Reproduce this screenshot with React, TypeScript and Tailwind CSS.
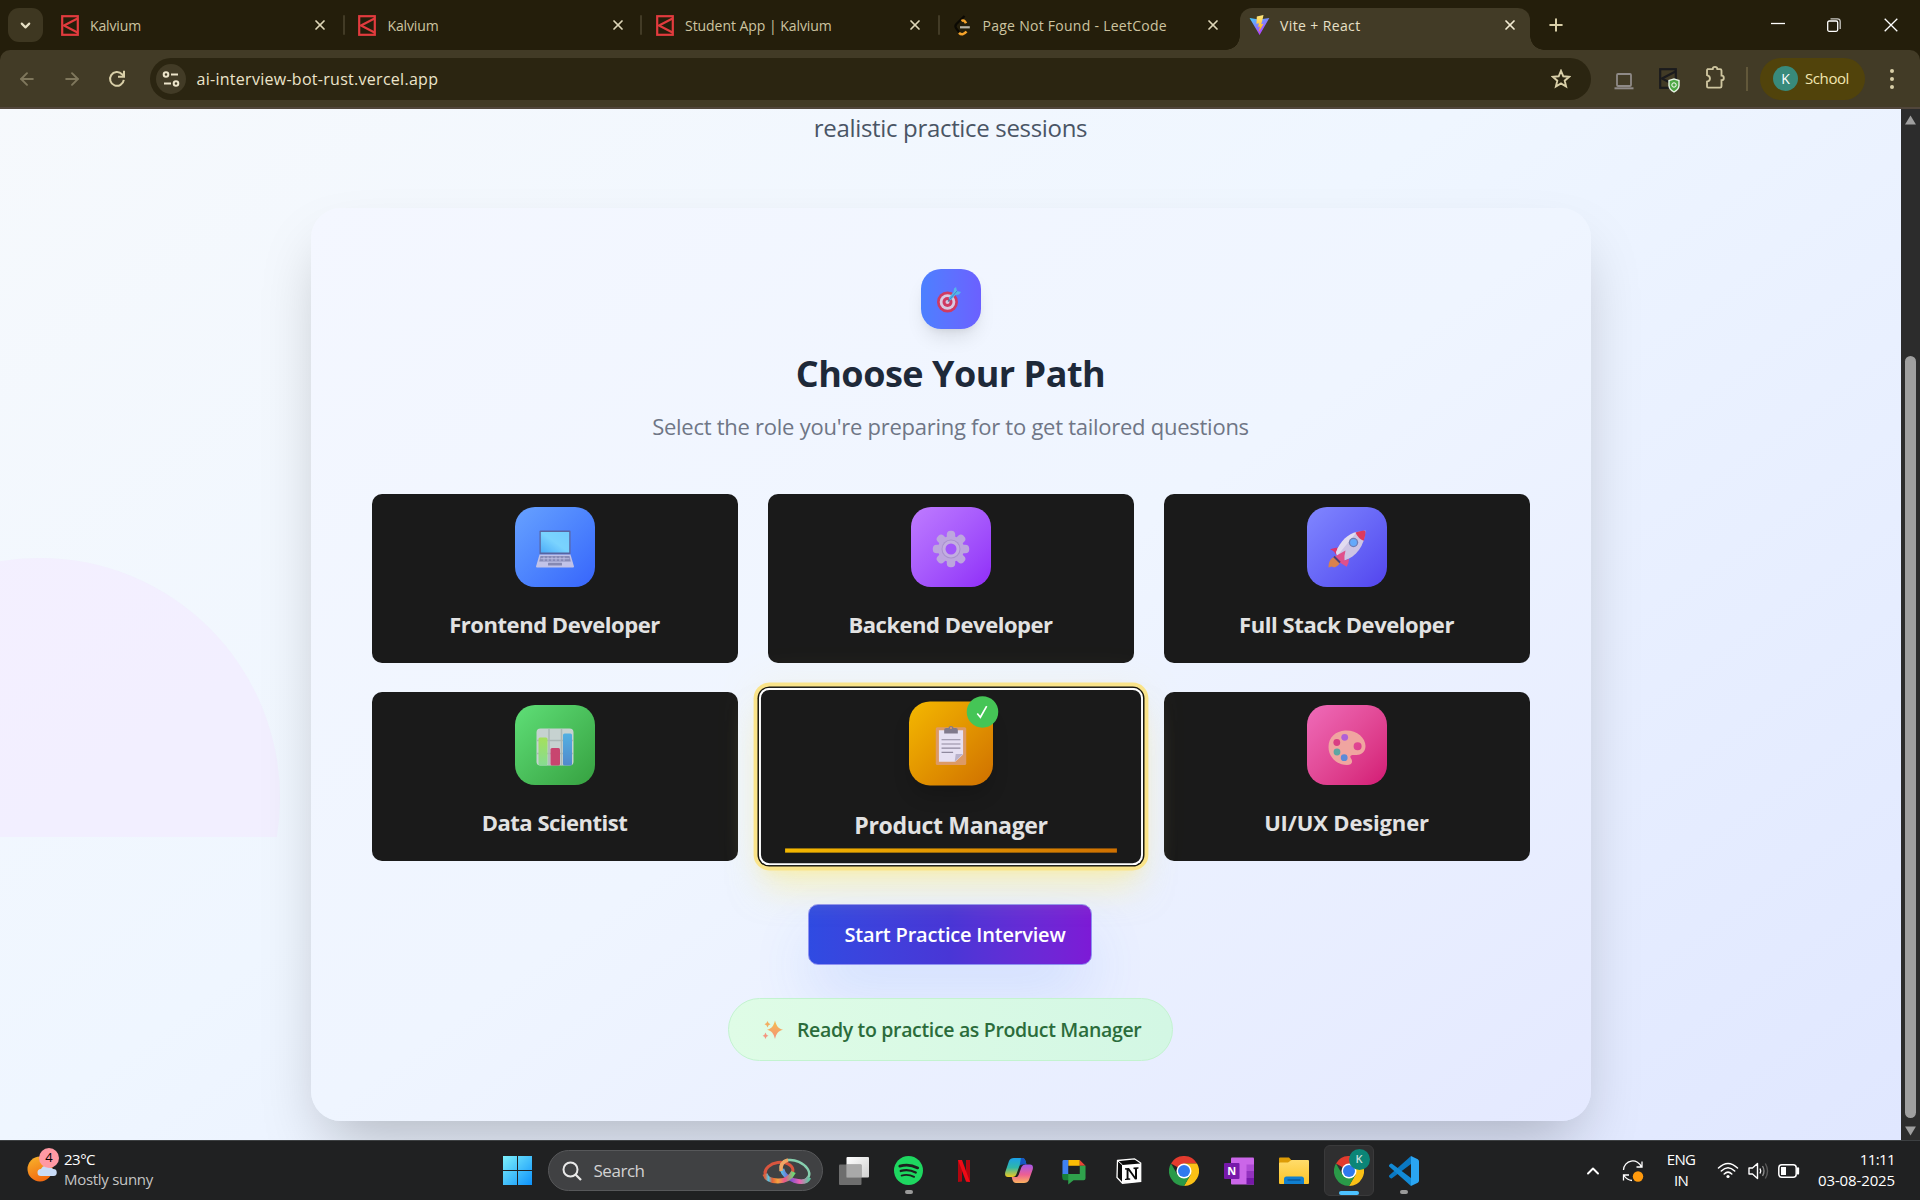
import type { ReactNode } from "react";
import { ArrowLeft, ArrowRight, ChevronDown, ChevronUp, Plus, X } from "lucide-react";

/* ---------- favicons ---------- */

function KalviumMark({ className }: { className: string }) {
  return (
    <svg viewBox="0 0 18 21" className={className} fill="none" stroke="currentColor" strokeWidth="2.200">
      <rect x="1.200" y="1.200" width="15.600" height="18.600" />
      <path d="M16.500 3.500 3 10.500 16.500 17.500" />
    </svg>
  );
}

function LeetCodeMark() {
  return (
    <svg viewBox="0 0 18 21" className="h-[21px] w-[18px]" fill="none" strokeWidth="2.200">
      <path d="M11.500 1 3.200 9.200Q1.600 11.200 3.200 13.400L6 17" stroke="#0b0903" />
      <path d="M8.500 6q2.500-1.800 4.500 2.300M6 17.800q3.500 3.500 7.500-1.300" stroke="#f5a32b" strokeWidth="2.600" />
      <path d="M7 12.300h9.800" stroke="#b9b4a6" />
    </svg>
  );
}

function ViteMark() {
  return (
    <svg viewBox="0 0 22 22" className="h-[22px] w-[21px]">
      <defs>
        <linearGradient id="vite-v" x1="0" y1="0" x2=".6" y2="1">
          <stop offset="0" stopColor="#41d1ff" />
          <stop offset="1" stopColor="#bd34fe" />
        </linearGradient>
        <linearGradient id="vite-bolt" x1="0" y1="0" x2="0" y2="1">
          <stop offset="0" stopColor="#ffea83" />
          <stop offset="1" stopColor="#ffa800" />
        </linearGradient>
      </defs>
      <path d="M.6 3.600 10.500 5.300 21.300 3.600 11.100 21.600Z" fill="url(#vite-v)" />
      <path d="M15.200.6 8.200 2 7.800 9.700l2.600-.5-.8 4 1.900-.6-1.300 5.900 5-8.800-2.400.5 1.200-4.300Z" fill="url(#vite-bolt)" />
    </svg>
  );
}

/* ---------- role emojis ---------- */

function LaptopEmoji() {
  return (
    <svg viewBox="0 0 38 38" className="size-[38px] opacity-90">
      <defs>
        <linearGradient id="screen" x1="0" y1="1" x2="1" y2="0">
          <stop offset="0" stopColor="#4cb0f8" />
          <stop offset=".5" stopColor="#7fdcff" />
          <stop offset="1" stopColor="#78d6ff" />
        </linearGradient>
      </defs>
      <rect x="3.500" y="0.500" width="31" height="24" rx="1" fill="#5a6198" />
      <rect x="4.800" y="2" width="28.400" height="20.500" fill="url(#screen)" />
      <path d="M3.500 24.500h31L38 36.500a1 1 0 0 1-1 1H1a1 1 0 0 1-1-1Z" fill="#cfcbe6" />
      <path d="M4.500 26h29l1.300 5.500H3.200Z" fill="#8f8db0" />
      <path d="M4.500 28.700h29M8 26.500v4.500M12 26.500v4.500M16 26.500v4.500M20 26.500v4.500M24 26.500v4.500M28 26.500v4.500" stroke="#cfcbe6" strokeWidth=".8" />
      <rect x="12" y="32.800" width="14" height="2.700" rx=".5" fill="#8d8bab" />
    </svg>
  );
}

function GearEmoji() {
  return (
    <svg viewBox="0 0 38 38" className="size-[38px]">
      <g fill="#bda6de">
        {[0, 45, 90, 135].map((a) => (
          <rect key={a} x="14.800" y=".8" width="8.400" height="36.400" rx="3.800" transform={`rotate(${a} 19 19)`} />
        ))}
        <circle cx="19" cy="19" r="13" />
      </g>
      <circle cx="19" cy="19" r="9.500" fill="#a993cc" />
      <circle cx="19" cy="19" r="8.500" fill="#c3afe0" />
      <circle cx="19" cy="19" r="5.500" fill="#a257fb" />
    </svg>
  );
}

function RocketEmoji() {
  return (
    <svg viewBox="0 0 38 38" className="size-[38px]">
      <path d="M8 26.500C3.500 27 .5 31 .5 37.500c1.500 0 2-1 3-1 1.500 0 2.500 1.500 4 .5 3-1.500 4.500-3.500 4.500-6Z" fill="#d9824c" />
      <path d="M2 19.500C6 17.500 11 17 15 18.500L8 25C7 22 5 20.500 2 19.500Z" fill="#d9346f" />
      <path d="M8 22.500C12 11 22 2.500 37.500.5 36.500 16 28 27 16.500 30.500L11 28.500Z" fill="#cdc4e4" />
      <path d="M8 22.500C12 11 20 4 29 1.800 24 8 15 19 9 26Z" fill="#e2dcf0" />
      <path d="M27.500 2.500Q32 .8 36 .5q1.700 0 1.500 2-.3 4-1.800 8.300Q30 8.500 27.500 2.500Z" fill="#dc3a5e" />
      <circle cx="25.500" cy="12.500" r="4.700" fill="#6e7cb4" />
      <circle cx="25.500" cy="12.500" r="3.400" fill="#64a9fb" />
      <path d="M6 27 17.500 20.500q-1.500 5.500-1 10l4.500-1.500q0 4-2.300 7.800L11 32Z" fill="#e0508c" />
      <path d="m6 26.500 6 6" stroke="#4a4277" strokeWidth="2" />
    </svg>
  );
}

function ChartEmoji() {
  return (
    <svg viewBox="0 0 38 38" className="size-[38px]">
      <defs>
        <linearGradient id="bar-green" x1="0" y1="0" x2="0" y2="1">
          <stop offset="0" stopColor="#a5e05c" />
          <stop offset="1" stopColor="#86dc92" />
        </linearGradient>
        <linearGradient id="bar-blue" x1="0" y1="0" x2="0" y2="1">
          <stop offset="0" stopColor="#52b0e2" />
          <stop offset="1" stopColor="#5289cb" />
        </linearGradient>
      </defs>
      <rect x=".5" y=".5" width="37" height="37" rx="4" fill="#c6d2d0" />
      <path d="M13 1v36M25.500 1v36M1 12.500h36M1 25.500h36" stroke="#abb8b6" strokeWidth="1.500" />
      <rect x="2.500" y="9.500" width="9" height="28" rx="1.500" fill="url(#bar-green)" />
      <rect x="14.500" y="20" width="9.500" height="17.500" rx="1.500" fill="#c8456f" />
      <rect x="27" y="5.500" width="9" height="32" rx="1.500" fill="url(#bar-blue)" />
    </svg>
  );
}

function ClipboardEmoji() {
  return (
    <svg viewBox="0 0 38 38" className="size-[38px]">
      <rect x="4.500" y="1.500" width="29" height="36" rx="1.500" fill="#dc9a66" />
      <path d="M7.500 4.500h23v23L23 34.500H7.500Z" fill="#e6e0f2" />
      <path d="m22.500 34.500 1-7.500h7Z" fill="#b9b1cb" />
      <path d="M12.500 7.500V4q0-1.800 2-1.800h2q.5-1.700 2.500-1.700t2.500 1.700h2q2 0 2 1.800v3.500Z" fill="#80798c" />
      <circle cx="19" cy="2.300" r="1" fill="#dc9a66" />
      <path d="M10 13.500h18M10 17.500h18M10 21.500h18M10 25.500h11" stroke="#8f889e" strokeWidth="1.100" />
    </svg>
  );
}

function PaletteEmoji() {
  return (
    <svg viewBox="0 0 38 38" className="mt-px size-[38px]">
      <path
        fillRule="evenodd"
        d="M17 2.500C29 2 37.500 10 37.500 18c0 6-4.500 9-9 9-3 0-5-.5-6 1-1 2 2 3 1.500 6-.3 2-2 3-5 3C9 37 .5 29 .5 19S8 3 17 2.500ZM29.600 14.300a4 4 0 1 0 0 8 4 4 0 0 0 0-8Z"
        fill="#f0a5a0"
      />
      <circle cx="16.700" cy="9.300" r="3.400" fill="#b05fd8" />
      <circle cx="8.800" cy="14.500" r="3.400" fill="#d93f84" />
      <circle cx="9" cy="24" r="3.400" fill="#5ea6a2" />
      <circle cx="16.200" cy="29.700" r="3.400" fill="#5b8ad8" />
    </svg>
  );
}

function TargetEmoji() {
  return (
    <svg viewBox="0 0 26 26" className="size-[26px]">
      <circle cx="11.500" cy="15" r="10.500" fill="#cf3a62" />
      <circle cx="11.500" cy="15" r="7.800" fill="#d8c9e2" />
      <circle cx="11.500" cy="15" r="5" fill="#cf3a62" />
      <circle cx="11.500" cy="15" r="2" fill="#d8c9e2" />
      <path d="m12 14.500 5-6" stroke="#5578a8" strokeWidth="1.200" />
      <path d="m12.500 11 5-6 .5-3.500 2-1.500 1 4 4 1-2 2.500-3.500.5-5 5.500Z" fill="#56b4ea" />
      <path d="m14 12 7-8" stroke="#3a7cc0" strokeWidth=".8" />
    </svg>
  );
}

function SparklesEmoji() {
  return (
    <svg viewBox="0 0 22 20" className="h-[20px] w-[22px]">
      <defs>
        <linearGradient id="spark" x1="0" y1="0" x2="0" y2="1">
          <stop offset="0" stopColor="#f5c04a" />
          <stop offset="1" stopColor="#f5907c" />
        </linearGradient>
      </defs>
      <path d="M13 .5c1.500 5.500 3 8 8 9.300-5 1.200-6.500 3.700-8 9.200-1.500-5.500-3-8-8-9.200 5-1.300 6.500-3.800 8-9.300Z" fill="url(#spark)" />
      <path d="M5.500 1q.6 2.500 3 3.200-2.400.6-3 3.200-.6-2.600-3-3.200 2.400-.7 3-3.200Z" fill="#f3ae62" />
      <path d="M3.500 12.500q.6 2.700 3 3.300-2.400.6-3 3.200-.6-2.600-3-3.200 2.400-.6 3-3.300Z" fill="#f49680" />
    </svg>
  );
}

/* ---------- browser chrome ---------- */

const kalvium = <KalviumMark className="h-[21px] w-[18px] text-[#e23b3e]" />;

const tabs: { title: string; icon: ReactNode; tracking: string; divider: boolean }[] = [
  { title: "Kalvium", icon: kalvium, tracking: "tracking-[-0.14px]", divider: true },
  { title: "Kalvium", icon: kalvium, tracking: "tracking-[-0.14px]", divider: true },
  { title: "Student App | Kalvium", icon: kalvium, tracking: "tracking-[-0.05px]", divider: true },
  { title: "Page Not Found - LeetCode", icon: <LeetCodeMark />, tracking: "tracking-[0.27px]", divider: false },
];

function TabStrip() {
  return (
    <div className="flex h-[50px] bg-[#241e0b]">
      <div className="flex w-[47px] items-center pl-2">
        <span className="flex h-[34px] w-[35px] items-center justify-center rounded-[11px] bg-[#3e3721]">
          <ChevronDown className="size-[15px] text-[#e6dfc4]" strokeWidth={3.4} />
        </span>
      </div>
      {tabs.map((tab, i) => (
        <div key={i} className="flex w-[297.5px] items-center pl-[13.5px] text-[#cdc4a0]">
          <span className="w-[29.5px]">{tab.icon}</span>
          <span className={`w-[222px] whitespace-nowrap text-[14px] ${tab.tracking}`}>{tab.title}</span>
          <X className="size-[16px] text-[#ded6b8]" strokeWidth={2.6} />
          {tab.divider && <span className="ml-auto h-[20px] w-[2px] rounded bg-[#423b26]" />}
        </div>
      ))}
      <div className="relative mt-2 ml-[3px] flex w-[290px] items-center rounded-t-[12px] bg-[#423b26] pb-2 pl-[9px]">
        <span className="absolute bottom-0 -left-[14px] size-[14px] bg-[radial-gradient(circle_at_0_0,transparent_13.500px,#423b26_14px)]" />
        <span className="absolute -right-[14px] bottom-0 size-[14px] bg-[radial-gradient(circle_at_100%_0,transparent_13.500px,#423b26_14px)]" />
        <span className="w-[31px]"><ViteMark /></span>
        <span className="w-[222px] whitespace-nowrap text-[14px] tracking-[0.38px] text-[#e8e0c6]">Vite + React</span>
        <X className="size-[16px] text-[#f2ebd3]" strokeWidth={2.6} />
      </div>
      <Plus className="mt-[15px] ml-[16px] size-[20px] text-[#d9cfa8]" strokeWidth={2.4} />
      <div className="ml-auto flex items-center pr-[22px] text-white">
        <svg viewBox="0 0 14 14" className="mr-[42px] mb-[2px] size-[14px]" fill="none" stroke="currentColor" strokeWidth="1.300">
          <path d="M0 6.500h14" />
        </svg>
        <svg viewBox="0 0 14 14" className="mr-[43px] size-[14px]" fill="none" stroke="currentColor" strokeWidth="1.300">
          <rect x=".7" y="3" width="10" height="10.300" rx="1.500" />
          <path d="M3.500 .8h7q2.700 0 2.700 2.700v7.500" opacity=".75" />
        </svg>
        <svg viewBox="0 0 14 14" className="size-[14px]" fill="none" stroke="currentColor" strokeWidth="1.300">
          <path d="m.7.7 12.600 12.600M13.300.7.7 13.300" />
        </svg>
      </div>
    </div>
  );
}

function Toolbar() {
  return (
    <div className="bg-[#241e0b]">
      <div className="flex h-[59px] items-center rounded-t-[10px] border-b-2 border-[#51463b] bg-[#423b26] pl-[17px]">
        <ArrowLeft className="size-[20px] text-[#7f775c]" strokeWidth={2.3} />
        <ArrowRight className="ml-[25px] size-[20px] text-[#7f775c]" strokeWidth={2.3} />
        <svg viewBox="0 0 18 18" className="ml-[26px] size-[18px] text-[#d9cfa8]" fill="none" stroke="currentColor" strokeWidth="2">
          <path d="M15.800 9.800A6.900 6.900 0 1 1 14 4.200L15.500 6" />
          <path d="M16 .8v6h-6" />
        </svg>
        <div className="ml-[24px] flex h-[42px] w-[1441px] items-center rounded-full bg-[#2b2511] pl-[6px]">
          <span className="flex size-[30px] items-center justify-center rounded-full bg-[#423b26]">
            <svg viewBox="0 0 18 16" className="h-[16px] w-[18px] text-[#ece4ca]" fill="none" stroke="currentColor" strokeWidth="2">
              <circle cx="4" cy="3.500" r="2.300" />
              <path d="M9 3.500h7M2 12.500h7" />
              <circle cx="14" cy="12.500" r="2.300" />
            </svg>
          </span>
          <span className="mt-px ml-[10.500px] text-[16px] tracking-[0.28px] text-[#ece4ca]">ai-interview-bot-rust.vercel.app</span>
          <svg viewBox="0 0 20 20" className="mr-[20px] ml-auto size-[20px] text-[#d9cfa8]" fill="none" stroke="currentColor" strokeWidth="1.900">
            <path d="m10 1.800 2.300 5.500 5.900.5-4.500 3.900 1.400 5.800L10 14.400l-5.100 3.100 1.400-5.800L1.800 7.800l5.900-.5Z" />
          </svg>
        </div>
        <svg viewBox="0 0 20 18" className="mt-1 ml-[23px] h-[18px] w-[20px] text-[#8f8a87]" fill="none" stroke="currentColor" strokeWidth="1.800">
          <rect x="3" y="2" width="14" height="12" rx="1" />
          <path d="M.5 16.300h19" strokeWidth="2" />
        </svg>
        <span className="relative ml-[25px]">
          <KalviumMark className="h-[23px] w-[18px] text-[#1b1b1d]" />
          <svg viewBox="0 0 12 15" className="absolute -right-[3px] -bottom-[3px] h-[15px] w-[12px]">
            <path d="M6 .3 11.700 2v5.500Q11.500 12 6 14.700.5 12 .3 7.500V2Z" fill="#e9f6e6" />
            <path d="M6 1.700 10.300 3v4.500Q10 11 6 13.200 2 11 1.700 7.500V3Z" fill="#4fa845" />
            <circle cx="6" cy="7" r="2.200" fill="none" stroke="#fff" strokeWidth="1" />
          </svg>
        </span>
        <svg viewBox="0 0 22 26" className="mb-[3px] ml-[28px] h-[24px] w-[21px] text-[#cfc6a0]" fill="none" stroke="currentColor" strokeWidth="2">
          <path d="M2.500 4.500H8a2.500 2.500 0 0 1 5 0h3q1.500 0 1.500 1.500v5.500a2.500 2.500 0 0 1 0 5V23q0 1.500-1.500 1.500H3q-1.200 0-1.200-1.300V18q3.200-.5 3.200-3.300T1.800 11V5.500Z" />
        </svg>
        <span className="ml-[20px] h-[24px] w-[2px] bg-[#62583a]" />
        <div className="ml-[12px] flex h-[42px] w-[105px] items-center rounded-full bg-[#51430b] pl-[13px] text-[#f3e6b0]">
          <span className="flex size-[25px] items-center justify-center rounded-full bg-[#388a7b] text-[14px] text-white">K</span>
          <span className="ml-[7px] text-[15px] tracking-[-0.41px]">School</span>
        </div>
        <div className="ml-[25px] flex flex-col gap-[4px]">
          <span className="size-[4px] rounded-full bg-[#d9cfa8]" />
          <span className="size-[4px] rounded-full bg-[#d9cfa8]" />
          <span className="size-[4px] rounded-full bg-[#d9cfa8]" />
        </div>
      </div>
    </div>
  );
}

function Scrollbar() {
  return (
    <div className="flex w-[19px] flex-col items-center bg-[#2c2c2c] pt-[6px] pb-[4px]">
      <svg viewBox="0 0 13 11" className="h-[10px] w-[13px] fill-[#9f9f9f]"><path d="M6.500.5 12.500 10.500H.5Z" /></svg>
      <span className="mt-[231px] h-[762px] w-[11px] rounded-full bg-[#9f9f9f]" />
      <svg viewBox="0 0 13 11" className="mt-auto h-[10px] w-[13px] fill-[#9f9f9f]"><path d="M6.500 10.500 12.500.5H.5Z" /></svg>
    </div>
  );
}

/* ---------- page ---------- */

type Role = { title: string; icon: ReactNode; tile: string; tracking: string };

const roles: Role[] = [
  { title: "Frontend Developer", icon: <LaptopEmoji />, tile: "from-[#67a1ff] to-[#3864fb]", tracking: "tracking-[-0.46px]" },
  { title: "Backend Developer", icon: <GearEmoji />, tile: "from-[#bf7bff] to-[#9029f8]", tracking: "tracking-[-0.47px]" },
  { title: "Full Stack Developer", icon: <RocketEmoji />, tile: "from-[#8186ff] to-[#5343ee]", tracking: "tracking-[-0.42px]" },
  { title: "Data Scientist", icon: <ChartEmoji />, tile: "from-[#5fdf77] to-[#36a140]", tracking: "tracking-[-0.5px]" },
  { title: "Product Manager", icon: <ClipboardEmoji />, tile: "from-[#f4b800] to-[#cf7000]", tracking: "tracking-[-0.36px]" },
  { title: "UI/UX Designer", icon: <PaletteEmoji />, tile: "from-[#ef6bb9] to-[#d31674]", tracking: "tracking-[-0.15px]" },
];

function RoleTile({ role, selected }: { role: Role; selected: boolean }) {
  return (
    <button
      type="button"
      className={`flex h-[168.500px] flex-col items-center rounded-[10px] bg-[#1a1a1a] pt-[13px] ${
        selected
          ? "z-10 scale-105 shadow-[inset_0_0_0_2px_#fff,0_0_0_1.3px_#15130a,0_0_0_5px_#fae48a,0_25px_32px_-6px_rgba(254,240,138,0.5),0_10px_13px_-7px_rgba(254,230,130,0.5),0_0_40px_0_rgba(254,240,138,0.18)]"
          : ""
      }`}
    >
      <span className={`relative flex size-[80px] items-center justify-center rounded-[20px] bg-linear-to-br pt-[3px] ${role.tile} ${selected ? "shadow-[0_12px_19px_-4px_rgba(0,0,0,0.2)]" : ""}`}>
        {role.icon}
        {selected && (
          <span className="absolute -top-[5px] -right-[5px] flex size-[30px] items-center justify-center rounded-full bg-[#45c556]">
            <svg viewBox="0 0 14 14" className="size-[14px]" fill="none" stroke="#fff" strokeWidth="1.600">
              <path d="m2 8.500 3 3.500L11 1.500" />
            </svg>
          </span>
        )}
      </span>
      <span className={`mt-[19px] text-[22px] leading-9 font-bold text-[#e2e2e2] ${role.tracking}`}>{role.title}</span>
      {selected && <span className="mt-[5px] h-[3.500px] w-[316px] bg-linear-to-r from-[#f4b800] to-[#cf7000]" />}
    </button>
  );
}

function Page() {
  return (
    <main className="relative h-[1031px] w-[1901px] overflow-hidden">
      <div className="absolute inset-x-0 bottom-0 h-[1340px] bg-linear-to-br from-slate-50 via-[#eff6ff] to-[#e0e7ff]" />
      <div className="absolute top-[449px] left-0 h-[279px] w-[280px] overflow-hidden">
        <div className="absolute top-0 -left-[200px] size-[480px] rounded-full bg-[#f3e8ff]/50" />
      </div>
      <div className="relative flex flex-col items-center">
        <p className="h-[99px] text-[24px] leading-[38px] tracking-[-0.32px] text-[#4a5565]">realistic practice sessions</p>
        <section className="flex h-[913px] w-[1280px] flex-col items-center rounded-[30px] bg-linear-to-br from-[#f4f7ff] via-[#eff5ff] to-[#e4e9ff] px-[61px] pt-[61px] shadow-[0_31px_62px_-15px_rgba(0,0,0,0.25)]">
          <div className="flex size-[60px] items-center justify-center rounded-[20px] bg-linear-to-r from-[#4b80ff] to-[#6b60ff] pt-[2px] pr-[3px] shadow-[0_12px_19px_-4px_rgba(0,0,0,0.1),0_5px_8px_-5px_rgba(0,0,0,0.1)]">
            <TargetEmoji />
          </div>
          <h2 className="mt-5 text-[36px] leading-[50px] font-bold tracking-[-0.5px] text-[#1e2939]">Choose Your Path</h2>
          <p className="mt-[10px] text-[22px] leading-[35px] tracking-[-0.26px] text-[#6f7686]">
            Select the role you're preparing for to get tailored questions
          </p>
          <div className="mt-[50px] grid w-full grid-cols-3 gap-x-[30px] gap-y-[29.500px]">
            {roles.map((role) => (
              <RoleTile key={role.title} role={role} selected={role.title === "Product Manager"} />
            ))}
          </div>
          <button
            type="button"
            className="mt-[43.500px] mr-[2px] flex h-[61px] w-[284px] items-center rounded-[10px] border border-[#8f92f2] bg-linear-to-r from-[#2f4be2] via-[#4936d6] to-[#7d1ad6] pt-px pl-[36px] text-[20px] font-semibold tracking-[-0.2px] text-white shadow-[0_31px_62px_-4px_rgba(59,110,246,0.16)]"
          >
            Start Practice Interview
          </button>
          <div className="mt-[33px] flex h-[63px] w-[445px] items-center rounded-full border border-[#c3f3d0] bg-linear-to-r from-[#dffce6] to-[#d3f7e4] pl-[33px] text-[#2b6c3b]">
            <SparklesEmoji />
            <span className="ml-[13px] text-[19.500px] font-semibold tracking-[-0.34px] whitespace-nowrap">Ready to practice as Product Manager</span>
          </div>
        </section>
      </div>
    </main>
  );
}

/* ---------- taskbar ---------- */

function ChromeLogo() {
  return (
    <svg viewBox="0 0 30 30" className="size-[30px]">
      <path d="M15 15 2 7.500A15 15 0 0 1 28 7.500H15Z" fill="#e33b2e" />
      <path d="M15 7.500h13A15 15 0 0 1 15 30l6.500-11.200Z" fill="#fbc116" />
      <path d="M2 7.500A15 15 0 0 0 15 30l6.500-11.200L8.500 18.800Z" fill="#2a9a48" />
      <circle cx="15" cy="15" r="7.500" fill="#fff" />
      <circle cx="15" cy="15" r="6" fill="#2f79ee" />
    </svg>
  );
}

function Slot({ children, mark }: { children: ReactNode; mark?: boolean }) {
  return (
    <div className="relative flex w-[55px] items-center justify-center">
      {children}
      {mark && <span className="absolute bottom-[6px] h-[4px] w-[8px] rounded-full bg-[#9a9a9a]" />}
    </div>
  );
}

function Rings() {
  return (
    <svg viewBox="0 0 50 28" className="h-[28px] w-[50px]" fill="none">
      <defs>
        <linearGradient id="ring-a" x1="0" y1="0" x2="1" y2="0">
          <stop offset="0" stopColor="#e0603a" />
          <stop offset=".12" stopColor="#58c7e6" />
          <stop offset=".25" stopColor="#e0603a" />
          <stop offset=".45" stopColor="#f6a33c" />
          <stop offset=".7" stopColor="#e8558f" />
          <stop offset="1" stopColor="#6fd873" />
        </linearGradient>
        <linearGradient id="ring-b" x1="0" y1="0" x2="1" y2="0">
          <stop offset="0" stopColor="#58b8e6" />
          <stop offset=".3" stopColor="#7a4fd0" />
          <stop offset=".65" stopColor="#ef62b4" />
          <stop offset="1" stopColor="#5fc7a0" />
        </linearGradient>
      </defs>
      <ellipse cx="33" cy="13.500" rx="15" ry="9.500" transform="rotate(24 33 13.500)" stroke="#86cfae" strokeWidth="2.500" />
      <path d="M20 12q2 8 12 11.500 12 3.500 15-3" stroke="url(#ring-b)" strokeWidth="4.500" />
      <ellipse cx="17" cy="14.500" rx="14" ry="9" transform="rotate(-8 17 14.500)" stroke="#d9553e" strokeWidth="3" />
      <path d="M3 17q2 7 13 7t15.500-9" stroke="url(#ring-a)" strokeWidth="5" />
      <path d="M19 14Q18 5 26 3" stroke="#f0a765" strokeWidth="3.500" />
    </svg>
  );
}

function Taskbar() {
  return (
    <footer className="flex h-[60px] border-t border-[#3d4042] bg-[#202122] text-[15px] text-white">
      <div className="flex w-[503px] items-center pl-[27px]">
        <div className="relative mr-[5px] h-[40px] w-[32px]">
          <svg viewBox="0 0 32 40" className="-mt-px h-[40px] w-[32px]">
            <defs>
              <linearGradient id="sun" x1="0" y1="0" x2=".4" y2="1">
                <stop offset="0" stopColor="#f8b62c" />
                <stop offset="1" stopColor="#f26c12" />
              </linearGradient>
            </defs>
            <circle cx="13" cy="19" r="12.500" fill="url(#sun)" />
            <path d="M14 26a3.500 3.500 0 0 1 0-7 5.500 5.500 0 0 1 9-1.500 3 3 0 0 1 3 1.500 3.500 3.500 0 0 1 .5 7Z" fill="#c9dcf8" />
          </svg>
          <span className="absolute -top-[3px] left-[12px] flex size-[20px] items-center justify-center rounded-full bg-[#ff99a4] text-[13px] text-black">4</span>
        </div>
        <div className="-mt-[3px] leading-[20.500px]">
          <div className="tracking-[-0.5px]">23°C</div>
          <div className="tracking-[-0.29px] text-[#c5c5c5]">Mostly sunny</div>
        </div>
      </div>

      <svg viewBox="0 0 29 29" className="mt-[15px] size-[29px]">
        <defs>
          <linearGradient id="win" x1="0" y1="0" x2="29" y2="29" gradientUnits="userSpaceOnUse">
            <stop offset="0" stopColor="#7df0fb" />
            <stop offset="1" stopColor="#0d92fb" />
          </linearGradient>
        </defs>
        <path d="M0 0h14v14H0ZM15 0h14v14H15ZM0 15h14v14H0ZM15 15h14v14H15Z" fill="url(#win)" />
      </svg>

      <div className="mt-[9px] ml-4 flex h-[41px] w-[275px] items-center rounded-full border border-[#57585a] bg-[#404143] pl-[13px]">
        <svg viewBox="0 0 20 20" className="size-[20px]" fill="none" stroke="#e9e9e9" strokeWidth="2">
          <circle cx="8.500" cy="8.500" r="7" />
          <path d="m13.500 13.500 5.500 5.500" strokeWidth="2.300" />
        </svg>
        <span className="ml-[11.500px] text-[17px] tracking-[-0.47px] text-[#d2d2d2]">Search</span>
        <span className="mr-[10px] ml-auto"><Rings /></span>
      </div>

      <div className="ml-[3px] flex">
        <Slot>
          <svg viewBox="0 0 30 28" className="h-[28px] w-[30px]">
            <defs>
              <linearGradient id="pane" x1="0" y1="0" x2="1" y2="1">
                <stop offset="0" stopColor="#fff" />
                <stop offset="1" stopColor="#d0d0d0" />
              </linearGradient>
            </defs>
            <rect x="7.500" y="0" width="22.500" height="20.500" rx="1" fill="url(#pane)" />
            <rect x="0" y="7.500" width="22.500" height="20.500" rx="1" fill="#777" opacity=".9" />
            <rect x="7.500" y="7.500" width="15" height="13" fill="#a9a9a9" />
          </svg>
        </Slot>
        <Slot mark>
          <svg viewBox="0 0 30 30" className="size-[29px]" fill="none" stroke="#1d1f1e" strokeLinecap="round">
            <circle cx="15" cy="15" r="15" fill="#1ed760" stroke="none" />
            <path d="M6 10.500q9.500-2.800 18.500 1.800" strokeWidth="2.900" />
            <path d="M7 15.500q8-2.300 15.500 1.600" strokeWidth="2.400" />
            <path d="M7.800 20.200q7-1.800 13 1.400" strokeWidth="1.900" />
          </svg>
        </Slot>
        <Slot>
          <svg viewBox="0 0 12 22" className="h-[22px] w-[12px]">
            <path d="M0 0h4v21.500l-4 .5ZM8 0h4v22l-4-.5Z" fill="#b1060f" />
            <path d="M0 0h4l8 22-4-.5Z" fill="#f00a16" />
          </svg>
        </Slot>
        <Slot>
          <svg viewBox="0 0 28 25" className="h-[25px] w-[28px]">
            <defs>
              <linearGradient id="cop-a" x1="0" y1="0" x2="0" y2="1">
                <stop offset="0" stopColor="#1ba0ea" />
                <stop offset=".5" stopColor="#2fb7a8" />
                <stop offset="1" stopColor="#f2c91d" />
              </linearGradient>
              <linearGradient id="cop-b" x1="0" y1="0" x2="0" y2="1">
                <stop offset="0" stopColor="#a457ea" />
                <stop offset=".55" stopColor="#ee5f92" />
                <stop offset="1" stopColor="#fbb35f" />
              </linearGradient>
            </defs>
            <path d="M9 0h8q2.500 0 3.500 3l.8 3H17q-2 0-2.700 2.200L11.500 16Q10.500 19 7.500 19H3Q-.8 19 .3 14L4 3Q5.200 0 9 0Z" fill="url(#cop-a)" />
            <path d="M16 0h1.500q2.300 0 3 3l1 3.500H17q-1.700 0-2.500 1.500Z" fill="#1657c4" />
            <path d="M19 25h-8q-2.500 0-3.500-3l-.8-3H11q2 0 2.700-2.200L16.500 9Q17.500 6.500 20.500 6.500H25q3.800 0 2.700 5L24 22q-1.200 3-5 3Z" fill="url(#cop-b)" />
          </svg>
        </Slot>
        <Slot>
          <svg viewBox="0 0 24 26" className="mt-[3px] h-[25px] w-[24px]">
            <path d="M6 0h12v6H6Z" fill="#fbbc04" />
            <path d="M18 0 24 6h-6Z" fill="#ea4335" />
            <path d="M1.500 0H6v14.500H0V1.500Q0 0 1.500 0Z" fill="#3f80f1" />
            <path d="M18 6h6v13q0 2-2 2H11.500L6 25.500V21l-5-1.500q-1-.5-1-5h18Z" fill="#2fa14c" />
            <path d="M0 14.500h6V21H2q-2 0-2-2Z" fill="#188038" />
          </svg>
        </Slot>
        <Slot>
          <svg viewBox="0 0 26 26" className="size-[26px]">
            <path d="m1.500 2.500 17-1.700L24.700 5v18.500L6.500 25.200 1 19.500Z" fill="#0b0b0b" stroke="#fff" strokeWidth="1.300" />
            <path d="M6.500 7 24.500 5.500v18.300L6.500 25Z" fill="#fff" />
            <path d="M1.500 2.500 6.500 7v18" stroke="#fff" fill="none" />
            <path d="M9 10.200 13 9.900 19 18.500v-7.300l-1.500-.3V9.600L22.500 9.200v1.200l-1.500.5v10.300l-2 .2-6.500-9v7.800l1.700.4v1.200l-5.200.3v-1.200l1.600-.5V11.700L9 11.400Z" fill="#0b0b0b" />
          </svg>
        </Slot>
        <Slot><ChromeLogo /></Slot>
        <Slot>
          <svg viewBox="0 0 30 28" className="h-[28px] w-[30px]">
            <path d="M7 1.500Q7 .5 8 .5h21q1 0 1 1v26H8q-1 0-1-1Z" fill="#cb66e9" />
            <path d="M22.500 7.500H30V14h-7.500Z" fill="#ae4bd5" />
            <path d="M22.500 14H30v7h-7.500Z" fill="#9332bf" />
            <path d="M22.500 21H30v6.500h-7.500Z" fill="#7719aa" />
            <rect x="0" y="6" width="15.500" height="16" rx="1" fill="#7719aa" />
            <text x="7.750" y="18" textAnchor="middle" fontSize="11" fontWeight="700" fill="#fff">N</text>
          </svg>
        </Slot>
        <Slot>
          <svg viewBox="0 0 30 27" className="h-[27px] w-[30px]">
            <defs>
              <linearGradient id="folder" x1="0" y1="0" x2="0" y2="1">
                <stop offset="0" stopColor="#ffdc6b" />
                <stop offset="1" stopColor="#fcc427" />
              </linearGradient>
            </defs>
            <path d="M0 1.500Q0 .5 1 .5h9l3 3.500h-1L9 10H0Z" fill="#dd9c06" />
            <path d="M0 6.500Q0 5.500 1 5.500h8L12.500 3H29q1 0 1 1v22q0 1-1 1H1q-1 0-1-1Z" fill="url(#folder)" />
            <path d="M5 27v-5q0-2.500 2.500-2.500h15Q25 19.500 25 22v5Z" fill="#107fd0" />
            <path d="M8.500 23h13" stroke="#0a5291" strokeWidth="1.300" />
          </svg>
        </Slot>
        <div className="relative my-[4px] mr-[2.500px] ml-[2.500px] flex w-[50px] items-center justify-center rounded-[6px] border border-[#3a3a3b] bg-[#2f2f30]">
          <ChromeLogo />
          <span className="absolute top-[3px] right-[3px] flex size-[21px] items-center justify-center rounded-full bg-[#0c8577] text-[11px] font-semibold text-[#c9dfdb]">K</span>
          <span className="absolute bottom-0 h-[4px] w-[20px] rounded-full bg-[#4cc2ff]" />
        </div>
        <Slot mark>
          <svg viewBox="0 0 30 30" className="size-[30px]">
            <path d="M22 8 3 22.300q-1 .5-1.800-.2l-1-1.200q-.6-.9.200-1.600L22 0Z" fill="#0a78c2" />
            <path d="M22 22 3 7.700q-1-.5-1.800.2l-1 1.200q-.6.900.2 1.600L22 30Z" fill="#128ad6" />
            <path d="M22 0 28.800 3.200Q30 4 30 5.200v19.600q0 1.200-1.200 2L22 30Z" fill="#2aa5f3" />
          </svg>
        </Slot>
      </div>

      <div className="ml-auto flex items-center pr-[25px]">
        <ChevronUp className="size-[20px]" strokeWidth={2.3} />
        <svg viewBox="0 0 22 22" className="ml-[19px] size-[22px]" fill="none" stroke="#fff" strokeWidth="1.300">
          <path d="M1.500 10A9.300 9.300 0 0 1 19.500 7M20 1.500V7h-5.500M10 20.500Q5 20 2 15.500M1.500 20.500V15H7" />
          <circle cx="16" cy="16.500" r="5.200" fill="#ff9a0d" stroke="none" />
        </svg>
        <div className="-mt-[2px] ml-[22px] w-[30px] text-center leading-[20.500px] tracking-[-0.7px]">
          <div>ENG</div>
          <div>IN</div>
        </div>
        <svg viewBox="0 0 22 18" className="-mt-[2px] ml-[21px] h-[18px] w-[22px]" fill="none" stroke="#fff" strokeWidth="1.500" strokeLinecap="round">
          <path d="M1.500 7Q11-2 20.500 7M4.300 10Q11 3.500 17.700 10M7.200 13Q11 9.300 14.800 13" />
          <circle cx="11" cy="15.500" r="1.600" fill="#fff" stroke="none" />
        </svg>
        <svg viewBox="0 0 22 20" className="ml-[9px] h-[20px] w-[22px]" fill="none" stroke="#fff" strokeWidth="1.400" strokeLinejoin="round">
          <path d="M1 7h3.500L9.500 2.500v15L4.500 13H1Z" />
          <path d="M12 7.500q1.500 2.500 0 5" />
          <path d="M14.500 5q3 5 0 10" stroke="#8a8a8a" />
          <path d="M17.300 2.500q4.500 7.500 0 15" stroke="#5a5a5a" />
        </svg>
        <svg viewBox="0 0 22 14" className="ml-[8px] h-[14px] w-[22px]" fill="none" stroke="#fff" strokeWidth="1.500">
          <rect x=".8" y=".8" width="17.400" height="12.400" rx="3" />
          <rect x="3" y="3" width="5" height="8" fill="#fff" stroke="none" />
          <path d="M20 4.500v5" strokeWidth="2.300" strokeLinecap="round" />
        </svg>
        <div className="-mt-[2px] ml-[15px] w-[80px] text-right leading-[20.500px]">
          <div className="tracking-[-0.6px]">11:11</div>
          <div className="tracking-[-0.13px]">03-08-2025</div>
        </div>
      </div>
    </footer>
  );
}

export default function App() {
  return (
    <div className="flex h-[1200px] w-[1920px] flex-col overflow-hidden font-['Open_Sans','Noto_Sans',sans-serif]">
      <TabStrip />
      <Toolbar />
      <div className="flex">
        <Page />
        <Scrollbar />
      </div>
      <Taskbar />
    </div>
  );
}
